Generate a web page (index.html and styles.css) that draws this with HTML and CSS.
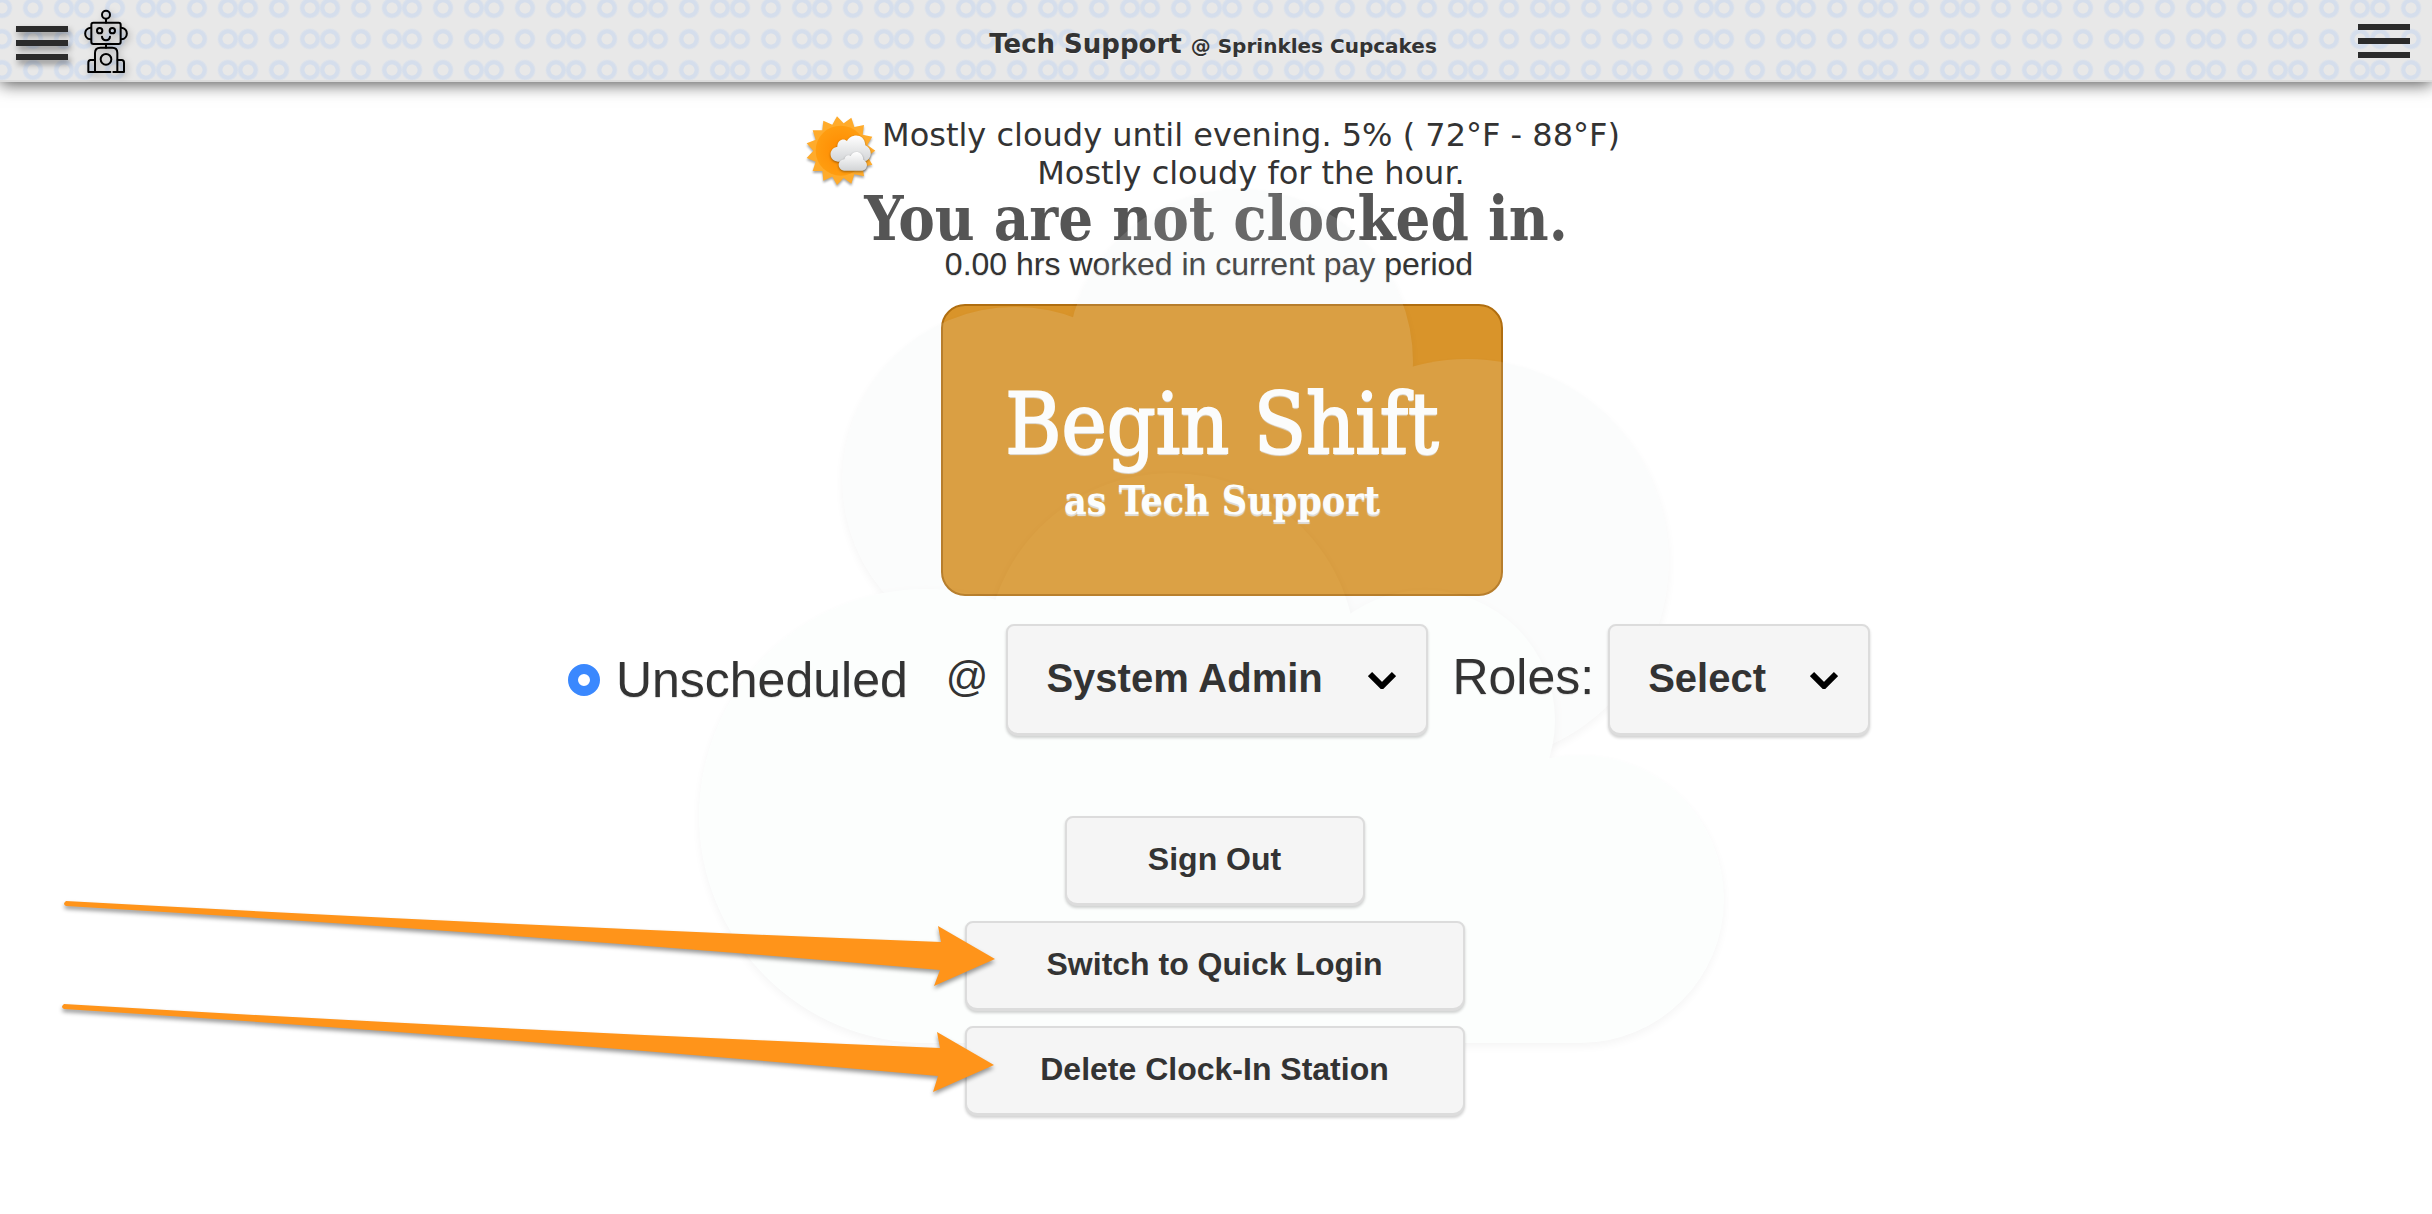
FILE: index.html
```html
<!DOCTYPE html>
<html lang="en">
<head>
<meta charset="utf-8">
<title>Clock In - Sprinkles Cupcakes</title>
<meta name="viewport" content="width=device-width, initial-scale=1">
<link rel="stylesheet" href="styles.css">
</head>
<body>
<header class="topbar">
  <div class="topbar-left">
    <button class="menu menu-raised" type="button" aria-label="Open menu">
      <span class="bar"></span><span class="bar"></span><span class="bar"></span>
    </button>
    <a class="robot" href="#" aria-label="Assistant">
      <svg width="44" height="65" viewBox="252 26 132 195" fill="none" stroke="#000" stroke-width="6" stroke-linecap="round" stroke-linejoin="round">
        <circle cx="318" cy="43" r="12"/>
        <path d="M318 56V67M318 131V142"/>
        <rect x="274" y="67" width="88" height="64" rx="6"/>
        <path d="M272 82C250 84 250 115 272 117M364 82C386 84 386 115 364 117"/>
        <circle cx="299" cy="91" r="8"/>
        <circle cx="337" cy="91" r="8"/>
        <path d="M306 109C307 123 329 123 330 109"/>
        <path d="M285 214V158Q285 142 301 142H337Q352 142 352 158V214"/>
        <circle cx="318" cy="177" r="16"/>
        <path d="M285 179H272Q265 179 265 187V215H331M340 215H372V187Q372 179 365 179H353"/>
      </svg>
    </a>
  </div>
  <h1 class="account">Tech Support <span class="company">@ Sprinkles Cupcakes</span></h1>
  <button class="menu menu-end" type="button" aria-label="Open options">
    <span class="bar"></span><span class="bar"></span><span class="bar"></span>
  </button>
</header>

<main class="station">
  <section class="weather">
    <svg class="sun" width="74" height="74" viewBox="-110 -110 222 222" aria-hidden="true">
      <defs>
        <radialGradient id="disc"><stop offset="0" stop-color="#ff8a00"/><stop offset="1" stop-color="#ff9d10"/></radialGradient>
        <linearGradient id="puff" x1="0" y1="0" x2="0" y2="1"><stop offset="0" stop-color="#fff"/><stop offset="1" stop-color="#d2d4d6"/></linearGradient>
      </defs>
      <polygon fill="#ffab2b" points="104,0 80,17 95,42 66,48 70,77 41,71 32,99 9,82 -11,103 -25,78 -52,90 -55,61 -84,61 -75,33 -102,22 -82,0 -102,-22 -75,-33 -84,-61 -55,-61 -52,-90 -25,-78 -11,-103 9,-82 32,-99 41,-71 70,-77 66,-48 95,-42 80,-17"/>
      <circle r="75" fill="url(#disc)"/>
      <path class="puff" fill="url(#puff)" d="M-8 33C-38 29-37-7-10-12C-10-33 10-39 19-29C29-51 72-55 74-16C98-5 95 29 68 33Z"/>
      <path class="puff" fill="url(#puff)" d="M10 60C-12 56-11 28 11 26C14 13 24 11 30 16C38-4 67 1 68 27C82 32 84 57 65 60Z"/>
    </svg>
    <p class="forecast">Mostly cloudy until evening. 5% ( 72°F - 88°F)<br>Mostly cloudy for the hour.</p>
  </section>

  <h2 class="status">You are not clocked in.</h2>
  <p class="hours">0.00 hrs worked in current pay period</p>

  <button class="begin" type="button">
    <span class="begin-title">Begin Shift</span>
    <span class="begin-user">as Tech Support</span>
  </button>

  <form class="shift">
    <label class="unscheduled"><input class="radio" type="radio" name="shift" checked>Unscheduled</label>
    <label class="at" for="location">@</label>
    <span class="picker picker-location">
      <select class="select" id="location"><option>System Admin</option></select>
      <svg class="chevron" width="28" height="18" viewBox="0 0 28 18" aria-hidden="true"><path d="M2 3L14 15L26 3"/></svg>
    </span>
    <label class="roles" for="roles">Roles:</label>
    <span class="picker picker-roles">
      <select class="select" id="roles"><option>Select</option></select>
      <svg class="chevron" width="28" height="18" viewBox="0 0 28 18" aria-hidden="true"><path d="M2 3L14 15L26 3"/></svg>
    </span>
  </form>

  <div class="actions">
    <button class="action action-small" type="button">Sign Out</button>
    <button class="action" type="button">Switch to Quick Login</button>
    <button class="action" type="button">Delete Clock-In Station</button>
  </div>

  <svg class="clouds" width="1040" height="870" viewBox="692 184 1040 870" aria-hidden="true">
    <g class="cloud cloud-back">
      <circle cx="1015" cy="480" r="173"/><circle cx="1240" cy="362" r="173"/><circle cx="1467" cy="561" r="202"/>
      <rect x="1015" y="440" width="440" height="213"/>
    </g>
    <g class="cloud cloud-front">
      <circle cx="926" cy="816" r="227"/><circle cx="1171" cy="658" r="185"/><circle cx="1425" cy="720" r="130"/><circle cx="1580" cy="899" r="144"/>
      <rect x="926" y="740" width="600" height="303"/><rect x="1500" y="900" width="80" height="143"/>
    </g>
  </svg>
  <svg class="arrows" width="940" height="180" viewBox="60 920 940 180" aria-hidden="true">
    <path d="M66 901Q502 925 941 942L938 926L995 959L934 986L940 970Q502 932 66 906Q62 904 66 901Z"/>
    <path d="M64 1004Q500 1030 940 1048L937 1032L994 1065L933 1092L938 1076Q500 1037 64 1009Q60 1007 64 1004Z"/>
  </svg>
</main>
</body>
</html>
```
FILE: styles.css
```css
* {
  box-sizing: border-box;
}

body {
  margin: 0;
  background: #fff;
  color: #333;
  font-family: "Liberation Sans", Arial, sans-serif;
}

h1, h2, p {
  margin: 0;
}

button, select {
  font-family: inherit;
  color: inherit;
  cursor: pointer;
}

/* Top bar */
.topbar {
  display: grid;
  grid-template-columns: 1fr auto 1fr;
  align-items: center;
  height: 82px;
  padding: 2px 22px 0 16px;
  border-bottom: 2px solid #dcdcdc;
  background-color: #e8e8e8;
  background-image:
    radial-gradient(circle at 15px 15px, transparent 5px, #d5deec 6px, #d5deec 9px, transparent 11px),
    radial-gradient(circle at 46px 15px, transparent 5px, #d5deec 6px, #d5deec 9px, transparent 11px),
    radial-gradient(circle at 66px 15px, transparent 5px, #d5deec 6px, #d5deec 9px, transparent 11px);
  background-size: 82px 31px;
  background-position: 18px -7px;
  box-shadow: 0 2px 16px rgba(0, 0, 0, 0.7);
}

.topbar-left {
  display: flex;
  align-items: center;
  gap: 16px;
}

.menu {
  display: flex;
  flex-direction: column;
  gap: 8px;
  width: 52px;
  padding: 0;
  border: 0;
  background: none;
}

.menu-raised .bar {
  box-shadow: 2px 4px 6px rgba(0, 0, 0, 0.4);
}

.menu-raised {
  margin-top: 4px;
}

.menu-end {
  justify-self: end;
}

.bar {
  width: 100%;
  height: 6px;
  background: #2b2b2b;
}

.robot svg {
  display: block;
  filter: drop-shadow(2px 3px 3px rgba(0, 0, 0, 0.3));
}

.account {
  padding-top: 8px;
  font: bold 26px/32px "DejaVu Sans", Verdana, sans-serif;
  text-shadow: 0 1px 0 #f3f3f3;
}

.company {
  font-size: 20px;
}

/* Clock-in station */
.station {
  position: relative;
  display: flex;
  flex-direction: column;
  align-items: center;
  padding: 32px 0 96px;
}

.weather {
  display: flex;
  align-items: flex-start;
}

.sun {
  filter: drop-shadow(0 2px 1px rgba(0, 0, 0, 0.35));
}

.puff {
  filter: drop-shadow(0 3px 3px rgba(0, 0, 0, 0.4));
}

.forecast {
  padding: 2px 8px 0 4px;
  font: 32px/38px "DejaVu Sans", Verdana, sans-serif;
  text-align: center;
}

.status {
  color: #555;
  font: bold 61px/54px "DejaVu Serif Condensed", "DejaVu Serif", serif;
}

.hours {
  padding-right: 14px;
  font-size: 32px;
  line-height: 36px;
  text-shadow: 0 1px 1px #ddd;
}

.begin {
  display: flex;
  flex-direction: column;
  align-items: center;
  justify-content: center;
  gap: 8px;
  width: 562px;
  height: 292px;
  margin: 22px 0 0 12px;
  border: 2px solid #b06e10;
  border-radius: 24px;
  background: #d9942a;
  color: #fff;
  font-family: "DejaVu Serif Condensed", "DejaVu Serif", serif;
  text-shadow: 0 2px 1px #ddd;
}

.begin-title {
  font-size: 85px;
  line-height: 92px;
  -webkit-text-stroke: 2px #fff;
}

.begin-user {
  font-size: 39px;
  font-weight: bold;
  line-height: 44px;
}

.shift,
.actions {
  position: relative;
  z-index: 1;
}

.shift {
  display: flex;
  align-items: center;
  margin: 28px 0 0 6px;
}

.unscheduled {
  display: flex;
  align-items: center;
  gap: 16px;
  margin-right: 38px;
  font-size: 50px;
  text-shadow: 0 1px 1px #ddd;
}

.radio {
  appearance: none;
  width: 32px;
  height: 32px;
  margin: 0;
  border: 10px solid #3a88fe;
  border-radius: 50%;
  background: #fff;
}

.at {
  margin-right: 18px;
  padding-bottom: 6px;
  font-size: 42px;
}

.roles {
  margin: 0 14px 0 24px;
  padding-bottom: 6px;
  font-size: 50px;
  text-shadow: 0 1px 1px #ddd;
}

.picker {
  display: grid;
  align-items: center;
}

.picker-location {
  width: 422px;
}

.picker-roles {
  width: 262px;
}

.select,
.action {
  border: 2px solid #dcdcdc;
  border-bottom-width: 3px;
  border-radius: 8px 8px 12px 12px;
  background: #f5f5f5;
  box-shadow: 0 2px 3px rgba(0, 0, 0, 0.18);
  font-weight: bold;
}

.select {
  grid-area: 1 / 1;
  appearance: none;
  width: 100%;
  height: 112px;
  padding: 0 38px 4px;
  font-size: 40px;
}

.chevron {
  grid-area: 1 / 1;
  justify-self: end;
  margin-right: 32px;
  fill: none;
  stroke: #000;
  stroke-width: 6;
  pointer-events: none;
}

.actions {
  display: flex;
  flex-direction: column;
  align-items: center;
  gap: 15px;
  margin: 80px 3px 0 0;
}

.action {
  width: 500px;
  height: 90px;
  padding-bottom: 4px;
  font-size: 32px;
}

.action-small {
  width: 300px;
}

/* Translucent clouds drifting over the page */
.clouds {
  position: absolute;
  top: 102px;
  left: calc(50% - 524px);
  opacity: 0.13;
  pointer-events: none;
}

.cloud {
  filter: drop-shadow(0 4px 4px rgba(0, 0, 0, 0.3));
}

.cloud-back {
  fill: #e6ebeb;
}

.cloud-front {
  fill: #eefaf6;
}

/* Callout arrows */
.arrows {
  position: absolute;
  z-index: 2;
  top: 838px;
  left: calc(50% - 1156px);
  overflow: visible;
  fill: #ff941a;
  filter: drop-shadow(0 3px 2px rgba(0, 0, 0, 0.4));
  pointer-events: none;
}
```
